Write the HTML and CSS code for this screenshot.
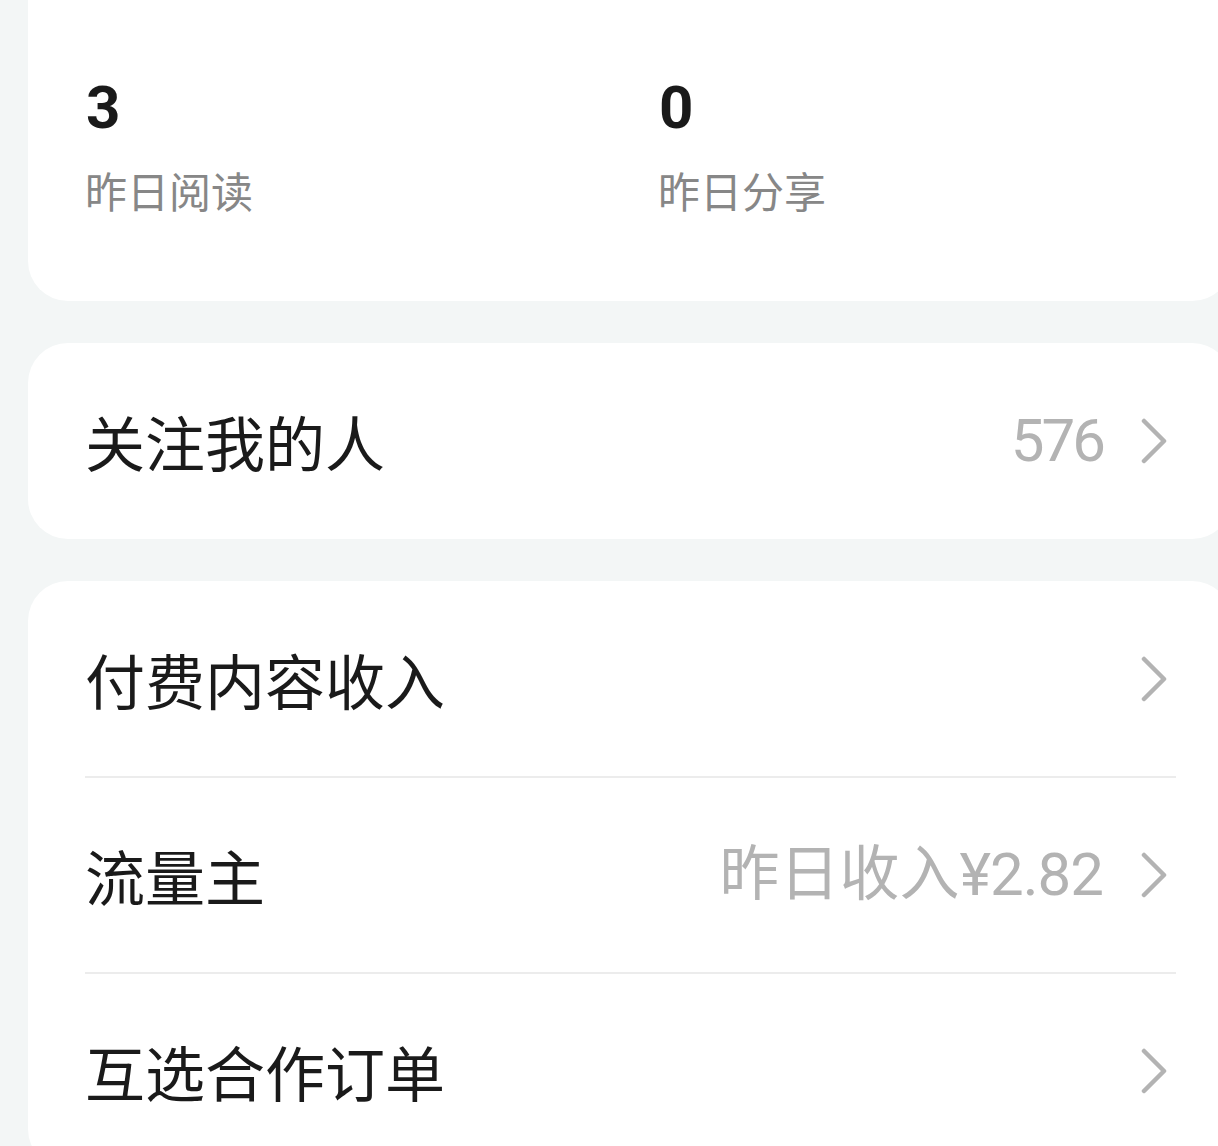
FILE: index.html
```html
<!DOCTYPE html>
<html lang="zh-CN">
<head>
<meta charset="utf-8">
<title>创作数据</title>
<link rel="stylesheet" href="styles.css">
</head>
<body>
<div class="page">
  <section class="card stats">
    <div class="stat">
      <div class="stat-value">3</div>
      <div class="stat-label">昨日阅读</div>
    </div>
    <div class="stat">
      <div class="stat-value">0</div>
      <div class="stat-label">昨日分享</div>
    </div>
  </section>

  <section class="card">
    <div class="row">
      <span class="row-title">关注我的人</span>
      <span class="row-value"><span class="num">576</span></span>
      <svg class="chevron" viewBox="0 0 26 46" width="26" height="46"><polyline points="3,3 23,23 3,43"/></svg>
    </div>
  </section>

  <section class="card list">
    <div class="row">
      <span class="row-title">付费内容收入</span>
      <svg class="chevron" viewBox="0 0 26 46" width="26" height="46"><polyline points="3,3 23,23 3,43"/></svg>
    </div>
    <div class="divider"></div>
    <div class="row">
      <span class="row-title">流量主</span>
      <span class="row-value">昨日收入<span class="num money">¥2.82</span></span>
      <svg class="chevron" viewBox="0 0 26 46" width="26" height="46"><polyline points="3,3 23,23 3,43"/></svg>
    </div>
    <div class="divider"></div>
    <div class="row">
      <span class="row-title">互选合作订单</span>
      <svg class="chevron" viewBox="0 0 26 46" width="26" height="46"><polyline points="3,3 23,23 3,43"/></svg>
    </div>
  </section>
</div>
</body>
</html>
```

FILE: styles.css
```css
html, body {
  margin: 0;
  padding: 0;
  overflow: hidden;
}

body {
  width: 1218px;
  height: 1146px;
  background: #f3f6f6;
  font-family: "Roboto", "Noto Sans CJK SC", sans-serif;
  color: #1a1a1a;
}

.page {
  width: 1260px;
  box-sizing: border-box;
  padding: 0 28px;
  display: flex;
  flex-direction: column;
  gap: 42px;
}

.card {
  background: #ffffff;
  border-radius: 40px;
}

.stats {
  border-radius: 0 0 40px 40px;
  height: 301px;
  box-sizing: border-box;
  padding: 78px 0 0 57px;
  display: grid;
  grid-template-columns: 573px 1fr;
  align-items: start;
}

.stat {
  display: flex;
  flex-direction: column;
  gap: 31px;
}

.stat-value {
  font-size: 60px;
  line-height: 60px;
  font-weight: 700;
  color: #1a1a1a;
  padding-left: 1px;
}

.stat-label {
  font-family: "Noto Sans CJK SC", sans-serif;
  font-size: 42px;
  line-height: 42px;
  color: #878787;
}

.row {
  height: 196px;
  box-sizing: border-box;
  padding: 0 65px 0 57px;
  display: flex;
  align-items: center;
}

.row-title {
  flex: 1;
  font-family: "Noto Sans CJK SC", sans-serif;
  font-size: 60px;
  line-height: 60px;
  color: #1a1a1a;
}

.row-value {
  font-size: 60px;
  line-height: 60px;
  color: #b3b3b3;
  margin-right: 38px;
}

.num {
  letter-spacing: -3px;
}

.num.money {
  letter-spacing: -1px;
}

.chevron {
  display: block;
  flex: none;
}

.chevron polyline {
  fill: none;
  stroke: #b3b3b3;
  stroke-width: 4.5;
  stroke-linecap: round;
  stroke-linejoin: round;
}

.divider {
  height: 2px;
  background: #ececec;
  margin: 0 56px 0 57px;
}

.list .row + .divider {
  margin-top: -1px;
  margin-bottom: -1px;
}
```
